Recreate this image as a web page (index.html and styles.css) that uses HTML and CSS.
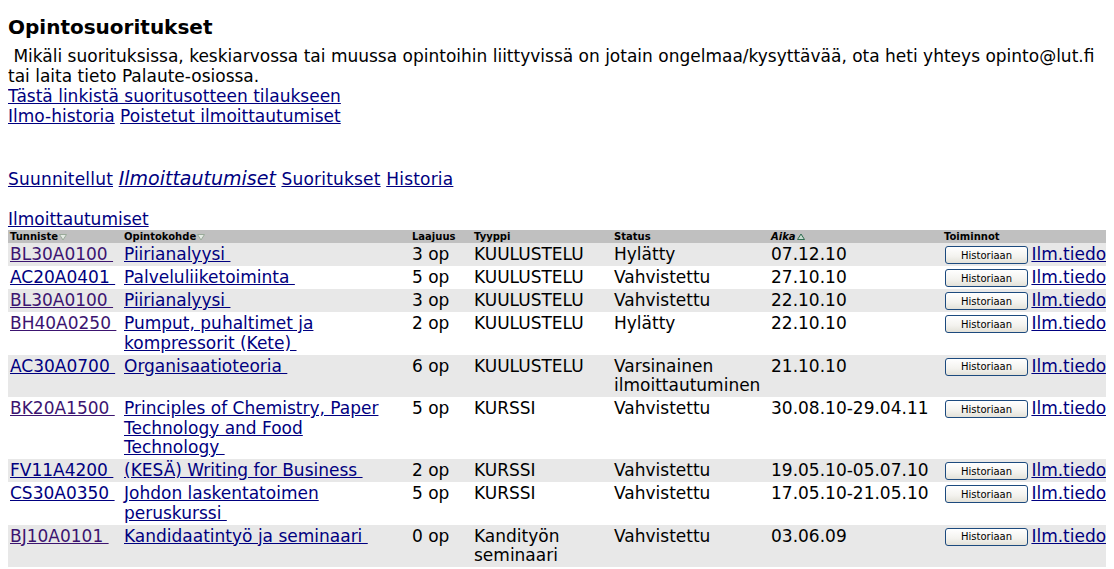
FILE: index.html
```html
<!DOCTYPE html>
<html lang="fi">
<head>
    <meta charset="UTF-8">
    <title>Opintosuoritukset</title>
    <link rel="stylesheet" href="styles.css">
</head>
<body>

<h1 class="title">Opintosuoritukset</h1>

<div class="notice">
    &nbsp;Mikäli suorituksissa, keskiarvossa tai muussa opintoihin liittyvissä on jotain ongelmaa/kysyttävää, ota heti yhteys opinto@lut.fi tai laita tieto Palaute-osiossa.<br>
    <a href="#">Tästä linkistä suoritusotteen tilaukseen</a><br>
    <a href="#">Ilmo-historia</a> <a href="#">Poistetut ilmoittautumiset</a>
</div>

<div class="tabs">
    <a href="#">Suunnitellut</a>
    <a href="#" class="active">Ilmoittautumiset</a>
    <a href="#">Suoritukset</a>
    <a href="#">Historia</a>
</div>

<div class="section-title"><a href="#">Ilmoittautumiset</a></div>

<table class="reg-table">
    <colgroup>
        <col style="width:114px">
        <col style="width:288px">
        <col style="width:62px">
        <col style="width:140px">
        <col style="width:157px">
        <col style="width:173px">
        <col style="width:200px">
    </colgroup>
    <thead>
        <tr>
            <th>Tunniste<svg class="sort" width="8" height="8" viewBox="0 0 8 8"><polygon points="0.5,1.5 7.5,1.5 4,7" fill="#e4ebe4" stroke="#9aaa9a"/></svg></th>
            <th>Opintokohde<svg class="sort" width="8" height="8" viewBox="0 0 8 8"><polygon points="0.5,1.5 7.5,1.5 4,7" fill="#e4ebe4" stroke="#9aaa9a"/></svg></th>
            <th>Laajuus</th>
            <th>Tyyppi</th>
            <th>Status</th>
            <th><i>Aika</i><svg class="sort" width="8" height="8" viewBox="0 0 8 8"><polygon points="0.5,6.5 7.5,6.5 4,1" fill="#c6dccf" stroke="#2f6b4f"/></svg></th>
            <th>Toiminnot</th>
        </tr>
    </thead>
    <tbody id="rows"></tbody>
</table>

<script>
    // Ilmoittautumiset: tunniste, kohde, laajuus, tyyppi, status, aika, visited
    const regs = [
        ['BL30A0100', 'Piirianalyysi', '3 op', 'KUULUSTELU', 'Hylätty', '07.12.10', true],
        ['AC20A0401', 'Palveluliiketoiminta', '5 op', 'KUULUSTELU', 'Vahvistettu', '27.10.10', false],
        ['BL30A0100', 'Piirianalyysi', '3 op', 'KUULUSTELU', 'Vahvistettu', '22.10.10', true],
        ['BH40A0250', 'Pumput, puhaltimet ja kompressorit (Kete)', '2 op', 'KUULUSTELU', 'Hylätty', '22.10.10', true],
        ['AC30A0700', 'Organisaatioteoria', '6 op', 'KUULUSTELU', 'Varsinainen ilmoittautuminen', '21.10.10', false],
        ['BK20A1500', 'Principles of Chemistry, Paper Technology and Food Technology', '5 op', 'KURSSI', 'Vahvistettu', '30.08.10-29.04.11', true],
        ['FV11A4200', '(KESÄ) Writing for Business', '2 op', 'KURSSI', 'Vahvistettu', '19.05.10-05.07.10', false],
        ['CS30A0350', 'Johdon laskentatoimen peruskurssi', '5 op', 'KURSSI', 'Vahvistettu', '17.05.10-21.05.10', false],
        ['BJ10A0101', 'Kandidaatintyö ja seminaari', '0 op', 'Kandityön seminaari', 'Vahvistettu', '03.06.09', true],
        ['BJ10A0101', 'Kandidaatintyö ja seminaari', '10 op', 'KURSSI', 'Vahvistettu', '01.09.09', true]
    ];

    const tbody = document.getElementById('rows');

    regs.forEach(function (r) {
        const tr = document.createElement('tr');
        const cls = r[6] ? ' class="visited"' : '';
        tr.innerHTML =
            '<td><a href="#"' + cls + '>' + r[0] + '&nbsp;</a></td>' +
            '<td><a href="#">' + r[1] + '&nbsp;</a></td>' +
            '<td>' + r[2] + '</td>' +
            '<td>' + r[3] + '</td>' +
            '<td>' + r[4] + '</td>' +
            '<td>' + r[5] + '</td>' +
            '<td class="actions"><button class="btn">Historiaan</button> <a href="#">Ilm.tiedot</a></td>';
        tbody.appendChild(tr);
    });
</script>

</body>
</html>
```

FILE: styles.css
```css
/* Page */
html {
    overflow: hidden;
}

body {
    margin: 8px;
    font-family: "DejaVu Sans", Verdana, sans-serif;
    font-size: 17px;
    line-height: 20px;
    color: #000;
    background: #fff;
}

a {
    color: #000080;
}

a.visited {
    color: #3c1470;
}

/* Header */
.title {
    font-size: 20px;
    line-height: 24px;
    margin: 7px 0 7px;
}

.notice {
    margin: 0;
}

/* Tabs */
.tabs {
    margin-top: 43px;
    height: 20px;
    line-height: 20px;
    letter-spacing: 0.2px;
}

.tabs .active {
    font-style: italic;
    font-size: 19px;
    line-height: 18px;
    letter-spacing: 0;
}

.section-title {
    margin-top: 20px;
}

/* Registrations table */
.reg-table {
    table-layout: fixed;
    width: 1134px;
    border-collapse: collapse;
    margin-top: 1px;
}

.reg-table th {
    background: #c0c0c0;
    font-size: 10px;
    line-height: 12px;
    font-weight: bold;
    text-align: left;
    padding: 1px 2px 0;
    white-space: nowrap;
}

.reg-table th .sort {
    margin-left: 1px;
    vertical-align: -1px;
}

.reg-table td {
    vertical-align: top;
    padding: 2px 2px 1.5px;
    line-height: 19.5px;
}

.reg-table tbody tr:nth-child(odd) {
    background: #e8e8e8;
}

.actions {
    white-space: nowrap;
}

.btn {
    width: 83px;
    height: 18px;
    margin: 1px -2px 0 1px;
    padding: 0;
    vertical-align: top;
    font-family: "DejaVu Sans", Tahoma, sans-serif;
    font-size: 10px;
    color: #000;
    border: 1px solid #1c4a7e;
    border-radius: 3px;
    background: linear-gradient(#ffffff, #f3f2ee 60%, #e3e1d8);
}
```
